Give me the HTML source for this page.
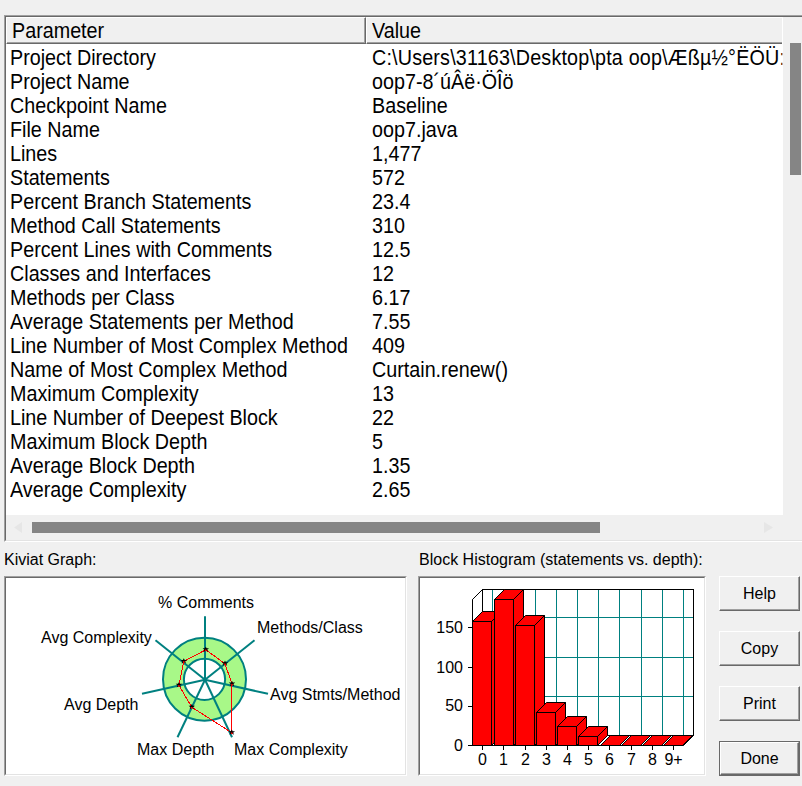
<!DOCTYPE html>
<html><head><meta charset="utf-8">
<style>
*{margin:0;padding:0;box-sizing:border-box}
html,body{width:802px;height:786px;overflow:hidden;background:#f0f0f0;font-family:"Liberation Sans",sans-serif;color:#000}
.a{position:absolute}
#list{position:absolute;left:4px;top:15px;width:820px;height:527px;border-top:1px solid #a0a0a0;border-left:1px solid #a0a0a0;border-bottom:1px solid #fff;}
#listin{position:absolute;left:0;top:0;right:0;bottom:0;border-top:1px solid #696969;border-left:1px solid #696969;border-bottom:1px solid #e3e3e3;background:#fff}
.hdr{position:absolute;top:17px;height:27px;background:#f0f0f0;border-top:1px solid #fff;border-left:1px solid #fff;border-bottom:1px solid #696969;border-right:1px solid #696969;box-shadow:inset 0 -1px 0 #a0a0a0, inset -1px 0 0 #a0a0a0;font-size:20px;line-height:24px}
.hdr span{position:absolute;left:5px;top:1px;font-size:21.5px;transform:scaleX(0.918);transform-origin:0 0;white-space:pre}
.row{position:absolute;height:24px;font-size:21.5px;line-height:24px;white-space:pre;transform:scaleX(0.918);transform-origin:0 0}
.lab{left:10px}
.val{left:372px}
.btn{position:absolute;left:719px;width:81px;height:35px;background:#f0f0f0;border-top:1px solid #fff;border-left:1px solid #fff;border-right:1px solid #696969;border-bottom:1px solid #696969;box-shadow:inset -1px -1px 0 #a0a0a0;font-size:16px;text-align:center;line-height:34px}
.lbl{position:absolute;font-size:16px;line-height:19px;white-space:pre}
.frame{position:absolute;border-top:1px solid #a0a0a0;border-left:1px solid #a0a0a0;border-right:1px solid #fff;border-bottom:1px solid #fff}
.frame>div{position:absolute;left:0;top:0;right:0;bottom:0;border-top:1px solid #696969;border-left:1px solid #696969;border-right:1px solid #e3e3e3;border-bottom:1px solid #e3e3e3;background:#fff}
</style></head><body>
<div id="list"><div id="listin"></div></div>
<!-- header -->
<div class="hdr" style="left:6px;width:360px"><span>Parameter</span></div>
<div class="hdr" style="left:366px;width:416px;border-right:0;box-shadow:inset 0 -1px 0 #a0a0a0"><span>Value</span></div>
<div class="a" style="left:782px;top:17px;width:1px;height:27px;background:#fff"></div>
<!-- vertical scrollbar -->
<div class="a" style="left:783px;top:17px;width:19px;height:498px;background:#f0f0f0"></div>
<div class="a" style="left:790px;top:43px;width:11px;height:132px;background:#858585"></div>
<!-- horizontal scrollbar -->
<div class="a" style="left:6px;top:515px;width:796px;height:25px;background:#f0f0f0"></div>
<div class="a" style="left:32px;top:522px;width:568px;height:11px;background:#858585"></div>
<svg class="a" style="left:0;top:0" width="802" height="786">
<polygon points="22,522 22,533 14,527.5" fill="#e6e6e6"/>
<polygon points="764,522 764,533 773,527.5" fill="#e6e6e6"/>
</svg>
<div id="rows">
<div class="row lab" style="top:46px">Project Directory</div><div class="row val" style="top:46px;width:446.6px;overflow:hidden;letter-spacing:0.19px">C:\Users\31163\Desktop\pta oop\Æßµ½°ËÖÜ:</div>
<div class="row lab" style="top:70px">Project Name</div><div class="row val" style="top:70px">oop7-8´úÂë·ÖÎö</div>
<div class="row lab" style="top:94px">Checkpoint Name</div><div class="row val" style="top:94px">Baseline</div>
<div class="row lab" style="top:118px">File Name</div><div class="row val" style="top:118px">oop7.java</div>
<div class="row lab" style="top:142px">Lines</div><div class="row val" style="top:142px">1,477</div>
<div class="row lab" style="top:166px">Statements</div><div class="row val" style="top:166px">572</div>
<div class="row lab" style="top:190px">Percent Branch Statements</div><div class="row val" style="top:190px">23.4</div>
<div class="row lab" style="top:214px">Method Call Statements</div><div class="row val" style="top:214px">310</div>
<div class="row lab" style="top:238px">Percent Lines with Comments</div><div class="row val" style="top:238px">12.5</div>
<div class="row lab" style="top:262px">Classes and Interfaces</div><div class="row val" style="top:262px">12</div>
<div class="row lab" style="top:286px">Methods per Class</div><div class="row val" style="top:286px">6.17</div>
<div class="row lab" style="top:310px">Average Statements per Method</div><div class="row val" style="top:310px">7.55</div>
<div class="row lab" style="top:334px">Line Number of Most Complex Method</div><div class="row val" style="top:334px">409</div>
<div class="row lab" style="top:358px">Name of Most Complex Method</div><div class="row val" style="top:358px">Curtain.renew()</div>
<div class="row lab" style="top:382px">Maximum Complexity</div><div class="row val" style="top:382px">13</div>
<div class="row lab" style="top:406px">Line Number of Deepest Block</div><div class="row val" style="top:406px">22</div>
<div class="row lab" style="top:430px">Maximum Block Depth</div><div class="row val" style="top:430px">5</div>
<div class="row lab" style="top:454px">Average Block Depth</div><div class="row val" style="top:454px">1.35</div>
<div class="row lab" style="top:478px">Average Complexity</div><div class="row val" style="top:478px">2.65</div>
</div>

<!-- lower section -->
<div class="lbl" style="left:4px;top:550px">Kiviat Graph:</div>
<div class="lbl" style="left:419px;top:550px">Block Histogram (statements vs. depth):</div>
<div class="frame" style="left:4px;top:576px;width:403px;height:200px"><div></div></div>
<div class="frame" style="left:418px;top:576px;width:288px;height:200px"><div></div></div>

<div class="btn" style="top:576px">Help</div>
<div class="btn" style="top:631px">Copy</div>
<div class="btn" style="top:686px">Print</div>
<div class="a" style="left:719px;top:741px;width:81px;height:35px;border:1px solid #696969"></div>
<div class="btn" style="top:742px;left:720px;width:79px;height:33px;line-height:32px">Done</div>

<!-- KIVIAT -->
<svg class="a" style="left:0;top:0" width="802" height="786" id="kiv">
<circle cx="204.5" cy="679.2" r="41.5" fill="#a8f888" stroke="#008080" stroke-width="2"/>
<circle cx="204.5" cy="679.3" r="20.6" fill="#fff" stroke="#008080" stroke-width="2"/>
<g stroke="#008080" stroke-width="2">
<line x1="205" y1="679.8" x2="205" y2="616.2"/>
<line x1="205" y1="679.8" x2="254.5" y2="640.3"/>
<line x1="205" y1="679.8" x2="268" y2="693.8"/>
<line x1="205" y1="679.8" x2="232" y2="737.3"/>
<line x1="205" y1="679.8" x2="177.5" y2="737.3"/>
<line x1="205" y1="679.8" x2="142" y2="693.8"/>
<line x1="205" y1="679.8" x2="155.5" y2="640.3"/>
</g>
<polygon points="205.8,649.8 225,663.7 232,684.1 231.8,732.7 191.8,707.2 178.9,685.3 183.8,661.4" fill="none" stroke="#f00" stroke-width="1" shape-rendering="crispEdges"/>
<g fill="#000"><polygon points="205.8,646.7 206.7,648.3 209.0,648.3 207.2,649.8 208.0,651.9 205.8,650.6 203.6,651.9 204.4,649.8 202.6,648.3 204.9,648.3"/><polygon points="225.0,660.6 225.9,662.2 228.2,662.2 226.4,663.7 227.2,665.8 225.0,664.5 222.8,665.8 223.6,663.7 221.8,662.2 224.1,662.2"/><polygon points="232.0,681.0 232.9,682.6 235.2,682.6 233.4,684.1 234.2,686.2 232.0,684.9 229.8,686.2 230.6,684.1 228.8,682.6 231.1,682.6"/><polygon points="231.8,729.6 232.7,731.2 235.0,731.2 233.2,732.7 234.0,734.8 231.8,733.5 229.6,734.8 230.4,732.7 228.6,731.2 230.9,731.2"/><polygon points="191.8,704.1 192.7,705.7 195.0,705.7 193.2,707.2 194.0,709.3 191.8,708.0 189.6,709.3 190.4,707.2 188.6,705.7 190.9,705.7"/><polygon points="178.9,682.2 179.8,683.8 182.1,683.8 180.3,685.3 181.1,687.4 178.9,686.1 176.7,687.4 177.5,685.3 175.7,683.8 178.0,683.8"/><polygon points="183.8,658.3 184.7,659.9 187.0,659.9 185.2,661.4 186.0,663.5 183.8,662.2 181.6,663.5 182.4,661.4 180.6,659.9 182.9,659.9"/></g>
<g fill="#f00"><rect x="205.0" y="649.6" width="1.6" height="1.6"/><rect x="224.2" y="663.5" width="1.6" height="1.6"/><rect x="231.2" y="683.9" width="1.6" height="1.6"/><rect x="231.0" y="732.5" width="1.6" height="1.6"/><rect x="191.0" y="707.0" width="1.6" height="1.6"/><rect x="178.1" y="685.1" width="1.6" height="1.6"/><rect x="183.0" y="661.2" width="1.6" height="1.6"/></g>
</svg>
<div class="lbl" style="left:158px;top:593px">% Comments</div>
<div class="lbl" style="left:257px;top:618px">Methods/Class</div>
<div class="lbl" style="left:41px;top:628px">Avg Complexity</div>
<div class="lbl" style="left:270px;top:685px">Avg Stmts/Method</div>
<div class="lbl" style="left:64px;top:695px">Avg Depth</div>
<div class="lbl" style="left:137px;top:740px">Max Depth</div>
<div class="lbl" style="left:234px;top:740px">Max Complexity</div>

<!-- HISTOGRAM -->
<svg class="a" style="left:0;top:0" width="802" height="786" id="hist">
<polygon points="472.5,599.5 482.5,589.5 482.5,735.5 472.5,745.5" fill="#fff" stroke="#000" stroke-width="1"/>
<rect x="482.5" y="589.5" width="211" height="146" fill="#fff" stroke="#000" stroke-width="1"/>
<line x1="482.5" y1="617.5" x2="693.5" y2="617.5" stroke="#008080" stroke-width="1"/>
<line x1="472.5" y1="627.5" x2="482.5" y2="617.5" stroke="#008080" stroke-width="1"/>
<line x1="482.5" y1="657.5" x2="693.5" y2="657.5" stroke="#008080" stroke-width="1"/>
<line x1="472.5" y1="667.5" x2="482.5" y2="657.5" stroke="#008080" stroke-width="1"/>
<line x1="482.5" y1="696.5" x2="693.5" y2="696.5" stroke="#008080" stroke-width="1"/>
<line x1="472.5" y1="706.5" x2="482.5" y2="696.5" stroke="#008080" stroke-width="1"/>
<line x1="492.5" y1="589.5" x2="492.5" y2="735.5" stroke="#008080" stroke-width="1"/>
<line x1="513.5" y1="589.5" x2="513.5" y2="735.5" stroke="#008080" stroke-width="1"/>
<line x1="535.5" y1="589.5" x2="535.5" y2="735.5" stroke="#008080" stroke-width="1"/>
<line x1="556.5" y1="589.5" x2="556.5" y2="735.5" stroke="#008080" stroke-width="1"/>
<line x1="577.5" y1="589.5" x2="577.5" y2="735.5" stroke="#008080" stroke-width="1"/>
<line x1="598.5" y1="589.5" x2="598.5" y2="735.5" stroke="#008080" stroke-width="1"/>
<line x1="619.5" y1="589.5" x2="619.5" y2="735.5" stroke="#008080" stroke-width="1"/>
<line x1="641.5" y1="589.5" x2="641.5" y2="735.5" stroke="#008080" stroke-width="1"/>
<line x1="662.5" y1="589.5" x2="662.5" y2="735.5" stroke="#008080" stroke-width="1"/>
<line x1="683.5" y1="589.5" x2="683.5" y2="735.5" stroke="#008080" stroke-width="1"/>
<rect x="482.5" y="589.5" width="211" height="146" fill="none" stroke="#000" stroke-width="1"/>
<polygon points="472.5,745.5 482.5,735.5 693.5,735.5 683.5,745.5" fill="#fff" stroke="#000" stroke-width="1"/>
<line x1="468" y1="627.5" x2="472.5" y2="627.5" stroke="#000" stroke-width="1"/>
<line x1="468" y1="667.5" x2="472.5" y2="667.5" stroke="#000" stroke-width="1"/>
<line x1="468" y1="706.5" x2="472.5" y2="706.5" stroke="#000" stroke-width="1"/>
<line x1="468" y1="745.5" x2="472.5" y2="745.5" stroke="#000" stroke-width="1"/>
<polygon points="472.5,621.5 482.5,611.5 501.5,611.5 491.5,621.5" fill="#f00" stroke="#000" stroke-width="1" stroke-linejoin="miter"/><polygon points="491.5,621.5 501.5,611.5 501.5,735.5 491.5,745.5" fill="#f00" stroke="#000" stroke-width="1"/><rect x="472.5" y="621.5" width="19" height="124.0" fill="#f00" stroke="#000" stroke-width="1"/>
<polygon points="494.5,599.5 504.5,589.5 523.5,589.5 513.5,599.5" fill="#f00" stroke="#000" stroke-width="1" stroke-linejoin="miter"/><polygon points="513.5,599.5 523.5,589.5 523.5,735.5 513.5,745.5" fill="#f00" stroke="#000" stroke-width="1"/><rect x="494.5" y="599.5" width="19" height="146.0" fill="#f00" stroke="#000" stroke-width="1"/>
<polygon points="515.5,625.5 525.5,615.5 544.5,615.5 534.5,625.5" fill="#f00" stroke="#000" stroke-width="1" stroke-linejoin="miter"/><polygon points="534.5,625.5 544.5,615.5 544.5,735.5 534.5,745.5" fill="#f00" stroke="#000" stroke-width="1"/><rect x="515.5" y="625.5" width="19" height="120.0" fill="#f00" stroke="#000" stroke-width="1"/>
<polygon points="536.5,712.5 546.5,702.5 565.5,702.5 555.5,712.5" fill="#f00" stroke="#000" stroke-width="1" stroke-linejoin="miter"/><polygon points="555.5,712.5 565.5,702.5 565.5,735.5 555.5,745.5" fill="#f00" stroke="#000" stroke-width="1"/><rect x="536.5" y="712.5" width="19" height="33.0" fill="#f00" stroke="#000" stroke-width="1"/>
<polygon points="557.5,726.5 567.5,716.5 586.5,716.5 576.5,726.5" fill="#f00" stroke="#000" stroke-width="1" stroke-linejoin="miter"/><polygon points="576.5,726.5 586.5,716.5 586.5,735.5 576.5,745.5" fill="#f00" stroke="#000" stroke-width="1"/><rect x="557.5" y="726.5" width="19" height="19.0" fill="#f00" stroke="#000" stroke-width="1"/>
<polygon points="578.5,736.5 588.5,726.5 607.5,726.5 597.5,736.5" fill="#f00" stroke="#000" stroke-width="1" stroke-linejoin="miter"/><polygon points="597.5,736.5 607.5,726.5 607.5,735.5 597.5,745.5" fill="#f00" stroke="#000" stroke-width="1"/><rect x="578.5" y="736.5" width="19" height="9.0" fill="#f00" stroke="#000" stroke-width="1"/>
<polygon points="600.5,745.5 610.5,735.5 629.5,735.5 619.5,745.5" fill="#f00" stroke="#000" stroke-width="1" stroke-linejoin="miter"/>
<polygon points="621.5,745.5 631.5,735.5 650.5,735.5 640.5,745.5" fill="#f00" stroke="#000" stroke-width="1" stroke-linejoin="miter"/>
<polygon points="642.5,745.5 652.5,735.5 671.5,735.5 661.5,745.5" fill="#f00" stroke="#000" stroke-width="1" stroke-linejoin="miter"/>
<polygon points="663.5,745.5 673.5,735.5 692.5,735.5 682.5,745.5" fill="#f00" stroke="#000" stroke-width="1" stroke-linejoin="miter"/>
<line x1="482.5" y1="745.5" x2="482.5" y2="750.0" stroke="#000" stroke-width="1"/>
<line x1="503.5" y1="745.5" x2="503.5" y2="750.0" stroke="#000" stroke-width="1"/>
<line x1="525.5" y1="745.5" x2="525.5" y2="750.0" stroke="#000" stroke-width="1"/>
<line x1="546.5" y1="745.5" x2="546.5" y2="750.0" stroke="#000" stroke-width="1"/>
<line x1="567.5" y1="745.5" x2="567.5" y2="750.0" stroke="#000" stroke-width="1"/>
<line x1="588.5" y1="745.5" x2="588.5" y2="750.0" stroke="#000" stroke-width="1"/>
<line x1="609.5" y1="745.5" x2="609.5" y2="750.0" stroke="#000" stroke-width="1"/>
<line x1="631.5" y1="745.5" x2="631.5" y2="750.0" stroke="#000" stroke-width="1"/>
<line x1="652.5" y1="745.5" x2="652.5" y2="750.0" stroke="#000" stroke-width="1"/>
<line x1="673.5" y1="745.5" x2="673.5" y2="750.0" stroke="#000" stroke-width="1"/>
<line x1="468" y1="745.5" x2="683.5" y2="745.5" stroke="#000" stroke-width="1"/>
<line x1="472.5" y1="599.5" x2="472.5" y2="745.5" stroke="#000" stroke-width="1"/>

</svg>
<div class="lbl" style="left:400px;width:63px;text-align:right;top:618px">150</div>
<div class="lbl" style="left:400px;width:63px;text-align:right;top:658px">100</div>
<div class="lbl" style="left:400px;width:63px;text-align:right;top:696px">50</div>
<div class="lbl" style="left:400px;width:63px;text-align:right;top:736px">0</div>
<div class="lbl" style="left:462.5px;width:40px;text-align:center;top:750px">0</div>
<div class="lbl" style="left:483.5px;width:40px;text-align:center;top:750px">1</div>
<div class="lbl" style="left:505.5px;width:40px;text-align:center;top:750px">2</div>
<div class="lbl" style="left:526.5px;width:40px;text-align:center;top:750px">3</div>
<div class="lbl" style="left:547.5px;width:40px;text-align:center;top:750px">4</div>
<div class="lbl" style="left:568.5px;width:40px;text-align:center;top:750px">5</div>
<div class="lbl" style="left:589.5px;width:40px;text-align:center;top:750px">6</div>
<div class="lbl" style="left:611.5px;width:40px;text-align:center;top:750px">7</div>
<div class="lbl" style="left:632.5px;width:40px;text-align:center;top:750px">8</div>
<div class="lbl" style="left:653.5px;width:40px;text-align:center;top:750px">9+</div>
</body></html>
